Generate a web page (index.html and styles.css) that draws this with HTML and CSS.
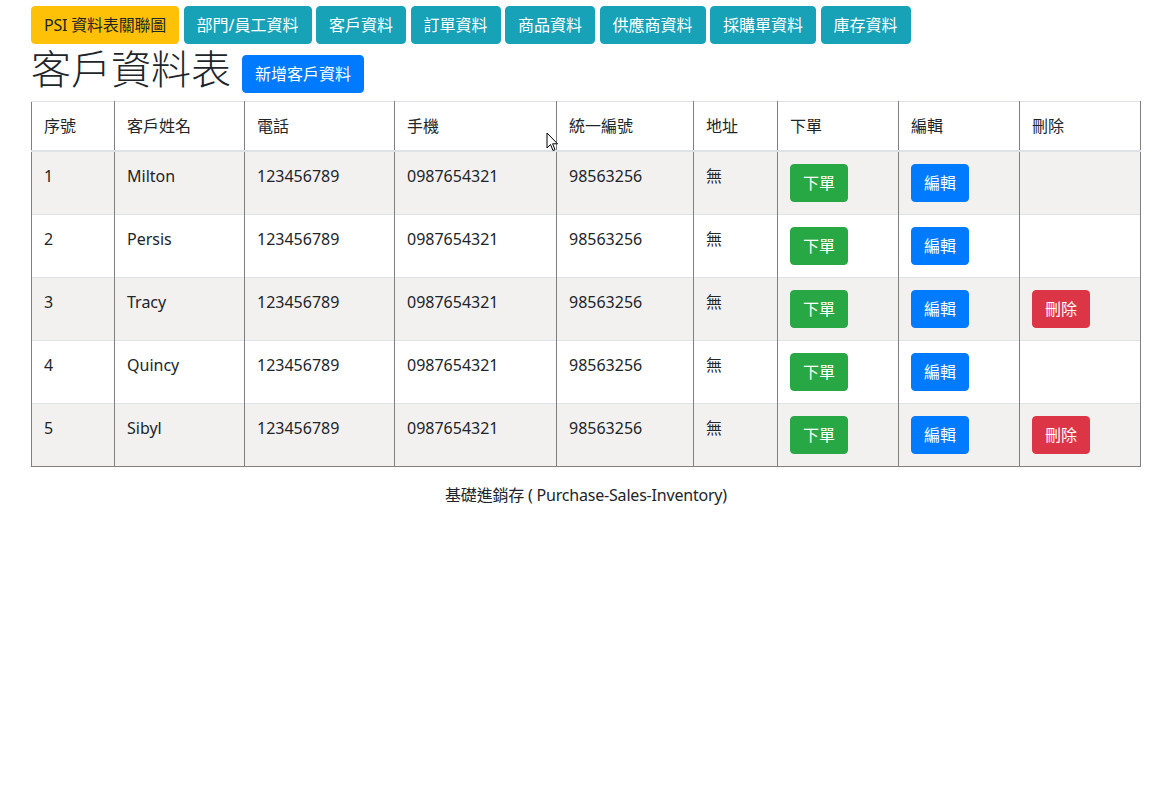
FILE: index.html
```html
<!DOCTYPE html>
<html lang="zh-Hant">
<head>
<meta charset="utf-8">
<title>客戶資料表</title>
<link rel="stylesheet" href="styles.css">
</head>
<body>
<div class="page">
  <nav class="nav">
    <a class="btn btn-warning">PSI 資料表關聯圖</a>
    <a class="btn btn-info">部門/員工資料</a>
    <a class="btn btn-info">客戶資料</a>
    <a class="btn btn-info">訂單資料</a>
    <a class="btn btn-info">商品資料</a>
    <a class="btn btn-info">供應商資料</a>
    <a class="btn btn-info">採購單資料</a>
    <a class="btn btn-info">庫存資料</a>
  </nav>
  <div class="title-row">
    <h1 class="title">客戶資料表</h1>
    <a class="btn btn-primary">新增客戶資料</a>
  </div>
  <table class="table">
    <colgroup>
      <col class="c1"><col class="c2"><col class="c3"><col class="c4"><col class="c5"><col class="c6"><col class="c7"><col class="c8"><col class="c9">
    </colgroup>
    <thead>
      <tr><th>序號</th><th>客戶姓名</th><th>電話</th><th>手機</th><th>統一編號</th><th>地址</th><th>下單</th><th>編輯</th><th>刪除</th></tr>
    </thead>
    <tbody>
      <tr><td>1</td><td>Milton</td><td>123456789</td><td>0987654321</td><td>98563256</td><td>無</td><td><a class="btn btn-success">下單</a></td><td><a class="btn btn-primary">編輯</a></td><td></td></tr>
      <tr><td>2</td><td>Persis</td><td>123456789</td><td>0987654321</td><td>98563256</td><td>無</td><td><a class="btn btn-success">下單</a></td><td><a class="btn btn-primary">編輯</a></td><td></td></tr>
      <tr><td>3</td><td>Tracy</td><td>123456789</td><td>0987654321</td><td>98563256</td><td>無</td><td><a class="btn btn-success">下單</a></td><td><a class="btn btn-primary">編輯</a></td><td><a class="btn btn-danger">刪除</a></td></tr>
      <tr><td>4</td><td>Quincy</td><td>123456789</td><td>0987654321</td><td>98563256</td><td>無</td><td><a class="btn btn-success">下單</a></td><td><a class="btn btn-primary">編輯</a></td><td></td></tr>
      <tr><td>5</td><td>Sibyl</td><td>123456789</td><td>0987654321</td><td>98563256</td><td>無</td><td><a class="btn btn-success">下單</a></td><td><a class="btn btn-primary">編輯</a></td><td><a class="btn btn-danger">刪除</a></td></tr>
    </tbody>
  </table>
  <footer class="footer">基礎進銷存 ( Purchase-Sales-Inventory)</footer>
</div>
<svg class="cursor" width="13" height="21" viewBox="0 0 13 21" aria-hidden="true">
  <path d="M1 1 L1 16 L4.5 12.5 L7 18.5 L9 17.6 L6.6 11.8 L11.5 11.8 Z" fill="#fff" stroke="#000" stroke-width="1" stroke-linejoin="round"/>
</svg>
</body>
</html>
```
FILE: styles.css
```css
html, body {
  margin: 0;
  padding: 0;
  background: #fff;
}
body {
  font-family: "Segoe UI", "Noto Sans", "Noto Sans CJK TC", sans-serif;
  font-size: 16px;
  line-height: 24px;
  color: #212529;
  position: relative;
}
.page {
  width: 1110px;
  margin-left: 31px;
  padding-top: 6px;
}
.nav {
  display: flex;
  gap: 4.5px;
  flex-wrap: wrap;
}
.btn {
  display: inline-block;
  padding: 6px 12px;
  border: 1px solid transparent;
  border-radius: 4px;
  font-size: 16px;
  line-height: 24px;
  color: #fff;
  text-decoration: none;
  white-space: nowrap;
  cursor: pointer;
}
.btn-warning { background: #ffc107; border-color: #ffc107; color: #212529; letter-spacing: -0.2px; }
.btn-info { background: #17a2b8; border-color: #17a2b8; }
.btn-primary { background: #007bff; border-color: #007bff; }
.btn-success { background: #28a745; border-color: #28a745; }
.btn-danger { background: #dc3545; border-color: #dc3545; }
.title-row {
  display: flex;
  align-items: flex-end;
  gap: 11px;
  margin-top: 1px;
  margin-bottom: 8px;
}
.title {
  margin: 0;
  font-size: 40px;
  line-height: 48px;
  font-weight: 300;
}
.table {
  width: 1110px;
  table-layout: fixed;
  border-collapse: collapse;
  border-bottom: 1px solid #808080;
  margin-bottom: 16px;
}
.c1 { width: 83px; }
.c2 { width: 130px; }
.c3 { width: 150px; }
.c4 { width: 162px; }
.c5 { width: 137px; }
.c6 { width: 84px; }
.c7 { width: 121px; }
.c8 { width: 121px; }
.c9 { width: 121px; }
.table th, .table td {
  text-align: left;
  vertical-align: top;
  padding: 12px;
  border-top: 1px solid #dee2e6;
  border-left: 1px solid #808080;
  border-right: 1px solid #808080;
  font-weight: 400;
}
.table thead th {
  border-bottom: 2px solid #dee2e6;
}
.table tbody tr:nth-child(odd) {
  background: #f2f1ef;
}
.footer {
  text-align: center;
  margin-top: 16px;
  letter-spacing: -0.2px;
}
.cursor {
  position: absolute;
  left: 546px;
  top: 132px;
}
```
